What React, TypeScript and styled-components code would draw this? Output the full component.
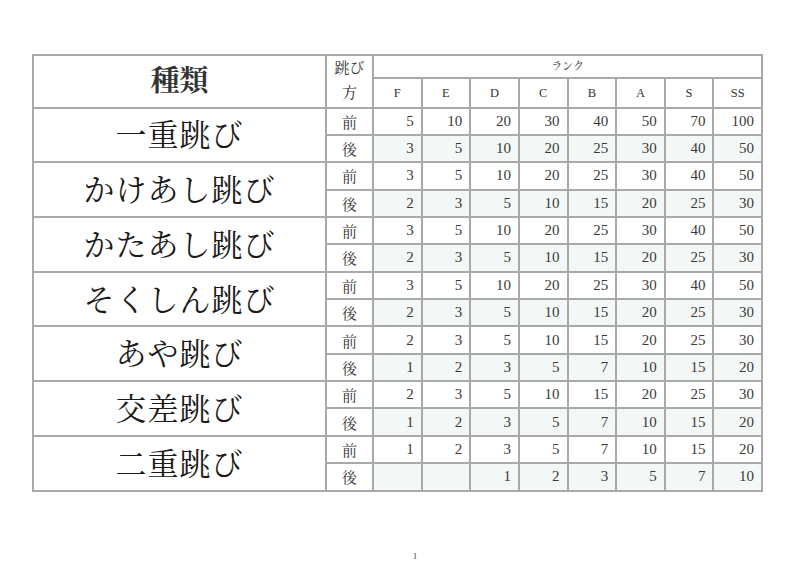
import React from "react";
import styled, { createGlobalStyle } from "styled-components";

const GlobalStyle = createGlobalStyle`
  html, body {
    margin: 0;
    padding: 0;
    background: #ffffff;
  }
  body {
    font-family: "Liberation Serif", "Noto Serif CJK JP", "Noto Sans CJK JP", serif;
    color: #222;
  }
`;

const LINE = "2px solid #a9a9a9";

const Page = styled.div`
  width: 800px;
  height: 566px;
  box-sizing: border-box;
  padding: 54px 0 0 32px;
  display: flex;
  flex-direction: column;
`;

const Table = styled.table`
  border-collapse: collapse;
  table-layout: fixed;
  width: 729px;
  border: ${LINE};
`;

const HeadCell = styled.th<{ $size: number; $bold?: boolean }>`
  border: ${LINE};
  padding: 0;
  font-size: ${(p) => p.$size}px;
  font-weight: ${(p) => (p.$bold ? 700 : 400)};
  text-align: center;
  vertical-align: middle;
  color: #333;
  line-height: 1;
`;

const KataHead = styled.div`
  display: flex;
  flex-direction: column;
  align-items: center;
  gap: 10px;
  font-size: 15px;
  color: #333;
`;

const NameCell = styled.td`
  border: ${LINE};
  padding: 0 0 4px;
  text-align: center;
  vertical-align: middle;
  font-size: 31px;
  letter-spacing: 1px;
  color: #1a1a1a;
`;

const KataCell = styled.td`
  border: ${LINE};
  padding: 0;
  text-align: center;
  vertical-align: middle;
  font-size: 15px;
  color: #333;
`;

const ValueCell = styled.td<{ $shaded: boolean }>`
  border: ${LINE};
  padding: 0 7px 0 0;
  text-align: right;
  vertical-align: middle;
  font-size: 15px;
  color: #3a3a3a;
  background: ${(p) => (p.$shaded ? "#f3f7f5" : "#ffffff")};
`;

const BodyRow = styled.tr`
  height: 27.36px;
`;

const Footer = styled.div`
  margin-top: 60px;
  width: 766px;
  text-align: center;
  font-size: 8px;
  color: #333;
`;

const ranks = ["F", "E", "D", "C", "B", "A", "S", "SS"];

type Kind = { name: string; front: (number | null)[]; back: (number | null)[] };

const basic = {
  front: [3, 5, 10, 20, 25, 30, 40, 50],
  back: [2, 3, 5, 10, 15, 20, 25, 30],
};
const cross = {
  front: [2, 3, 5, 10, 15, 20, 25, 30],
  back: [1, 2, 3, 5, 7, 10, 15, 20],
};

const kinds: Kind[] = [
  { name: "一重跳び", front: [5, 10, 20, 30, 40, 50, 70, 100], back: [3, 5, 10, 20, 25, 30, 40, 50] },
  { name: "かけあし跳び", ...basic },
  { name: "かたあし跳び", ...basic },
  { name: "そくしん跳び", ...basic },
  { name: "あや跳び", ...cross },
  { name: "交差跳び", ...cross },
  { name: "二重跳び", front: [1, 2, 3, 5, 7, 10, 15, 20], back: [null, null, 1, 2, 3, 5, 7, 10] },
];

export default function App() {
  return (
    <>
      <GlobalStyle />
      <Page>
        <Table>
          <colgroup>
            <col style={{ width: 293 }} />
            <col style={{ width: 47 }} />
            {ranks.map((r) => (
              <col key={r} style={{ width: 48.625 }} />
            ))}
          </colgroup>
          <thead>
            <tr style={{ height: 23 }}>
              <HeadCell rowSpan={2} $size={29} $bold>
                種類
              </HeadCell>
              <HeadCell rowSpan={2} $size={15}>
                <KataHead>
                  <span>跳び</span>
                  <span>方</span>
                </KataHead>
              </HeadCell>
              <HeadCell colSpan={8} $size={11}>
                ランク
              </HeadCell>
            </tr>
            <tr style={{ height: 29.5 }}>
              {ranks.map((r) => (
                <HeadCell key={r} $size={12.5}>
                  {r}
                </HeadCell>
              ))}
            </tr>
          </thead>
          <tbody>
            {kinds.map((k) => (
              <React.Fragment key={k.name}>
                <BodyRow>
                  <NameCell rowSpan={2}>{k.name}</NameCell>
                  <KataCell>前</KataCell>
                  {k.front.map((v, i) => (
                    <ValueCell key={i} $shaded={false}>
                      {v ?? ""}
                    </ValueCell>
                  ))}
                </BodyRow>
                <BodyRow>
                  <KataCell>後</KataCell>
                  {k.back.map((v, i) => (
                    <ValueCell key={i} $shaded>
                      {v ?? ""}
                    </ValueCell>
                  ))}
                </BodyRow>
              </React.Fragment>
            ))}
          </tbody>
        </Table>
        <Footer>1</Footer>
      </Page>
    </>
  );
}
